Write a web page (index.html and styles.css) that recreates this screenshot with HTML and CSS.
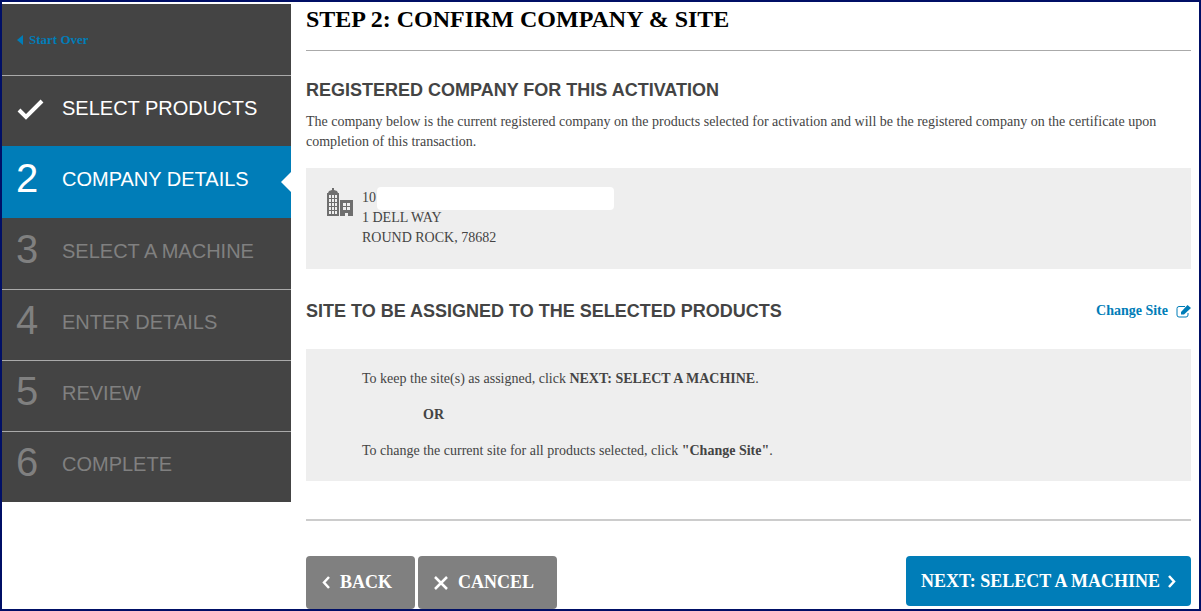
FILE: index.html
```html
<!DOCTYPE html>
<html lang="en">
<head>
    <meta charset="UTF-8">
    <meta name="viewport" content="width=device-width, initial-scale=1.0">
    <title>Step 2: Confirm Company &amp; Site</title>
    <link rel="stylesheet" href="styles.css">
</head>

<body>

<div class="page">
    <!-- Wizard steps -->
    <nav class="sidebar">
        <div class="start-over">
            <a href="#">
                <svg width="6" height="10" viewBox="0 0 6 10"><path d="M6 0v10L0 5z" fill="currentColor"/></svg>
                Start Over
            </a>
        </div>
        <ol class="steps">
            <li class="step done">
                <span class="num">
                    <svg width="28" height="21" viewBox="0 0 28 21"><path d="M3 11l7 7L26 2" fill="none" stroke="currentColor" stroke-width="4"/></svg>
                </span>
                <span class="label">SELECT PRODUCTS</span>
            </li>
            <li class="step active"><span class="num">2</span><span class="label">COMPANY DETAILS</span></li>
            <li class="step"><span class="num">3</span><span class="label">SELECT A MACHINE</span></li>
            <li class="step"><span class="num">4</span><span class="label">ENTER DETAILS</span></li>
            <li class="step"><span class="num">5</span><span class="label">REVIEW</span></li>
            <li class="step"><span class="num">6</span><span class="label">COMPLETE</span></li>
        </ol>
    </nav>

    <main class="content">
        <h1>STEP 2: CONFIRM COMPANY &amp; SITE</h1>

        <!-- Company -->
        <section class="company">
            <h2>REGISTERED COMPANY FOR THIS ACTIVATION</h2>
            <p>The company below is the current registered company on the products selected for activation and will be the registered company on the certificate upon completion of this transaction.</p>
            <div class="panel company-panel">
                <svg class="building" width="28" height="28" viewBox="0 0 28 28" fill="#6e6e6e">
                    <path d="M6 0h2v2l3 1 1 2H2l1-2 3-1z"/>
                    <path fill-rule="evenodd" d="M1 5h12v23H1zM3 7v3h2V7zM6 7v3h2V7zM9 7v3h2V7zM3 11v3h2v-3zM6 11v3h2v-3zM9 11v3h2v-3zM3 15v3h2v-3zM6 15v3h2v-3zM9 15v3h2v-3zM3 19v3h2v-3zM6 19v3h2v-3zM9 19v3h2v-3zM3 23v3h2v-3zM6 23v3h2v-3zM9 23v3h2v-3z"/>
                    <path fill-rule="evenodd" d="M14 12h13v16h-5v-3h-3v3h-5zM17 15v3h3v-3zM21 15v3h3v-3zM17 19v3h3v-3zM21 19v3h3v-3z"/>
                </svg>
                <address>
                    <div class="company-name">10<span class="redacted"></span></div>
                    <div>1 DELL WAY</div>
                    <div>ROUND ROCK, 78682</div>
                </address>
            </div>
        </section>

        <!-- Site -->
        <section class="site">
            <div class="site-head">
                <h2>SITE TO BE ASSIGNED TO THE SELECTED PRODUCTS</h2>
                <a href="#">
                    Change Site
                    <svg width="15" height="13" viewBox="0 0 15 13"><path d="M9 1.500H3a2 2 0 0 0-2 2V10a2 2 0 0 0 2 2h7a2 2 0 0 0 2-2V8" fill="none" stroke="currentColor"/><path d="M5 7l6.500-7L15 3 8 9.500H5z" fill="currentColor"/></svg>
                </a>
            </div>
            <div class="panel site-panel">
                <p>To keep the site(s) as assigned, click <strong>NEXT: SELECT A MACHINE</strong>.</p>
                <p class="or"><strong>OR</strong></p>
                <p>To change the current site for all products selected, click <strong>"Change Site"</strong>.</p>
            </div>
        </section>

        <div class="actions">
            <button type="button" class="btn">
                <svg width="8" height="13" viewBox="0 0 8 13"><path d="M7 1L2 6.500l5 5.500" fill="none" stroke="currentColor" stroke-width="2.500"/></svg>
                BACK
            </button>
            <button type="button" class="btn">
                <svg width="14" height="14" viewBox="0 0 14 14"><path d="M1 1l12 12M13 1L1 13" fill="none" stroke="currentColor" stroke-width="2.500"/></svg>
                CANCEL
            </button>
            <button type="button" class="btn next">
                NEXT: SELECT A MACHINE
                <svg width="8" height="13" viewBox="0 0 8 13"><path d="M1 1l5 5.500L1 12" fill="none" stroke="currentColor" stroke-width="2.500"/></svg>
            </button>
        </div>
    </main>
</div>

</body>
</html>
```
FILE: styles.css
```css
* {
    box-sizing: border-box;
}

body {
    margin: 0;
    font-family: "Liberation Serif", "Times New Roman", serif;
    font-size: 14px;
    line-height: 20px;
    color: #444;
    background: #fff;
}

h1, h2, p {
    margin: 0;
}

a {
    color: #007db8;
    font-weight: bold;
    text-decoration: none;
}

.page {
    display: flex;
    align-items: flex-start;
    gap: 15px;
    min-height: 100vh;
    padding: 2px 8px 0 0;
    border: 2px solid #000f66;
}

/* Sidebar */
.sidebar {
    flex: 0 0 289px;
    background: #444;
}

.start-over {
    display: flex;
    align-items: center;
    height: 71px;
    padding-left: 15px;
    font-size: 13px;
}

.start-over a {
    display: flex;
    align-items: center;
    gap: 6px;
}

.steps {
    margin: 0;
    padding: 0;
    list-style: none;
}

.step {
    position: relative;
    display: flex;
    align-items: center;
    height: 71px;
    padding: 0 14px 10px;
    border-top: 1px solid #aaa;
    font-family: "Liberation Sans", Arial, sans-serif;
    font-size: 20px;
    line-height: 24px;
    color: #808080;
}

.num {
    width: 46px;
    font-size: 40px;
}

.num svg {
    display: block;
    margin-top: 6px;
}

.label {
    padding-top: 3px;
}

.done {
    color: #fff;
}

.active {
    height: 72px;
    color: #fff;
    background: #007db8;
    border-top-color: #007db8;
}

.active + .step {
    border-top-color: #444;
}

/* Notch on the current step */
.active::after {
    content: "";
    position: absolute;
    top: 25px;
    right: 0;
    border: 10px solid transparent;
    border-right-color: #fff;
    border-left-width: 0;
}

/* Content */
.content {
    flex: 1;
    min-width: 0;
}

h1 {
    padding: 3px 0 19px;
    border-bottom: 1px solid #aaa;
    font-size: 24px;
    line-height: 24px;
    color: #000;
}

h2 {
    font-family: "Liberation Sans", Arial, sans-serif;
    font-size: 18px;
    line-height: 24px;
}

.company {
    padding-top: 27px;
}

.company p {
    padding: 10px 0 16px;
}

.panel {
    background: #eee;
}

.company-panel {
    display: flex;
    gap: 8px;
    padding: 20px 20px 21px;
}

address {
    font-style: normal;
}

.company-name {
    display: flex;
    align-items: center;
    gap: 1px;
    height: 20px;
}

.redacted {
    width: 237px;
    height: 23px;
    border-radius: 4px;
    background: #fff;
}

.site {
    padding-top: 30px;
}

.site-head {
    display: flex;
    justify-content: space-between;
    padding-bottom: 26px;
}

.site-head a {
    display: flex;
    align-items: center;
    gap: 8px;
}

.site-panel {
    padding: 20px 56px;
}

.site-panel .or {
    padding: 16px 61px;
}

/* Buttons */
.actions {
    display: flex;
    align-items: flex-start;
    gap: 3px;
    margin-top: 38px;
    padding-top: 35px;
    border-top: 2px solid #ccc;
}

.btn {
    display: flex;
    align-items: center;
    gap: 10px;
    height: 53px;
    padding: 0 23px 0 16px;
    border: 0;
    border-radius: 4px;
    font-family: inherit;
    font-size: 18px;
    font-weight: bold;
    color: #fff;
    background: #808080;
}

.next {
    gap: 8px;
    height: 50px;
    margin-left: auto;
    padding: 0 15px;
    background: #007db8;
}
```
